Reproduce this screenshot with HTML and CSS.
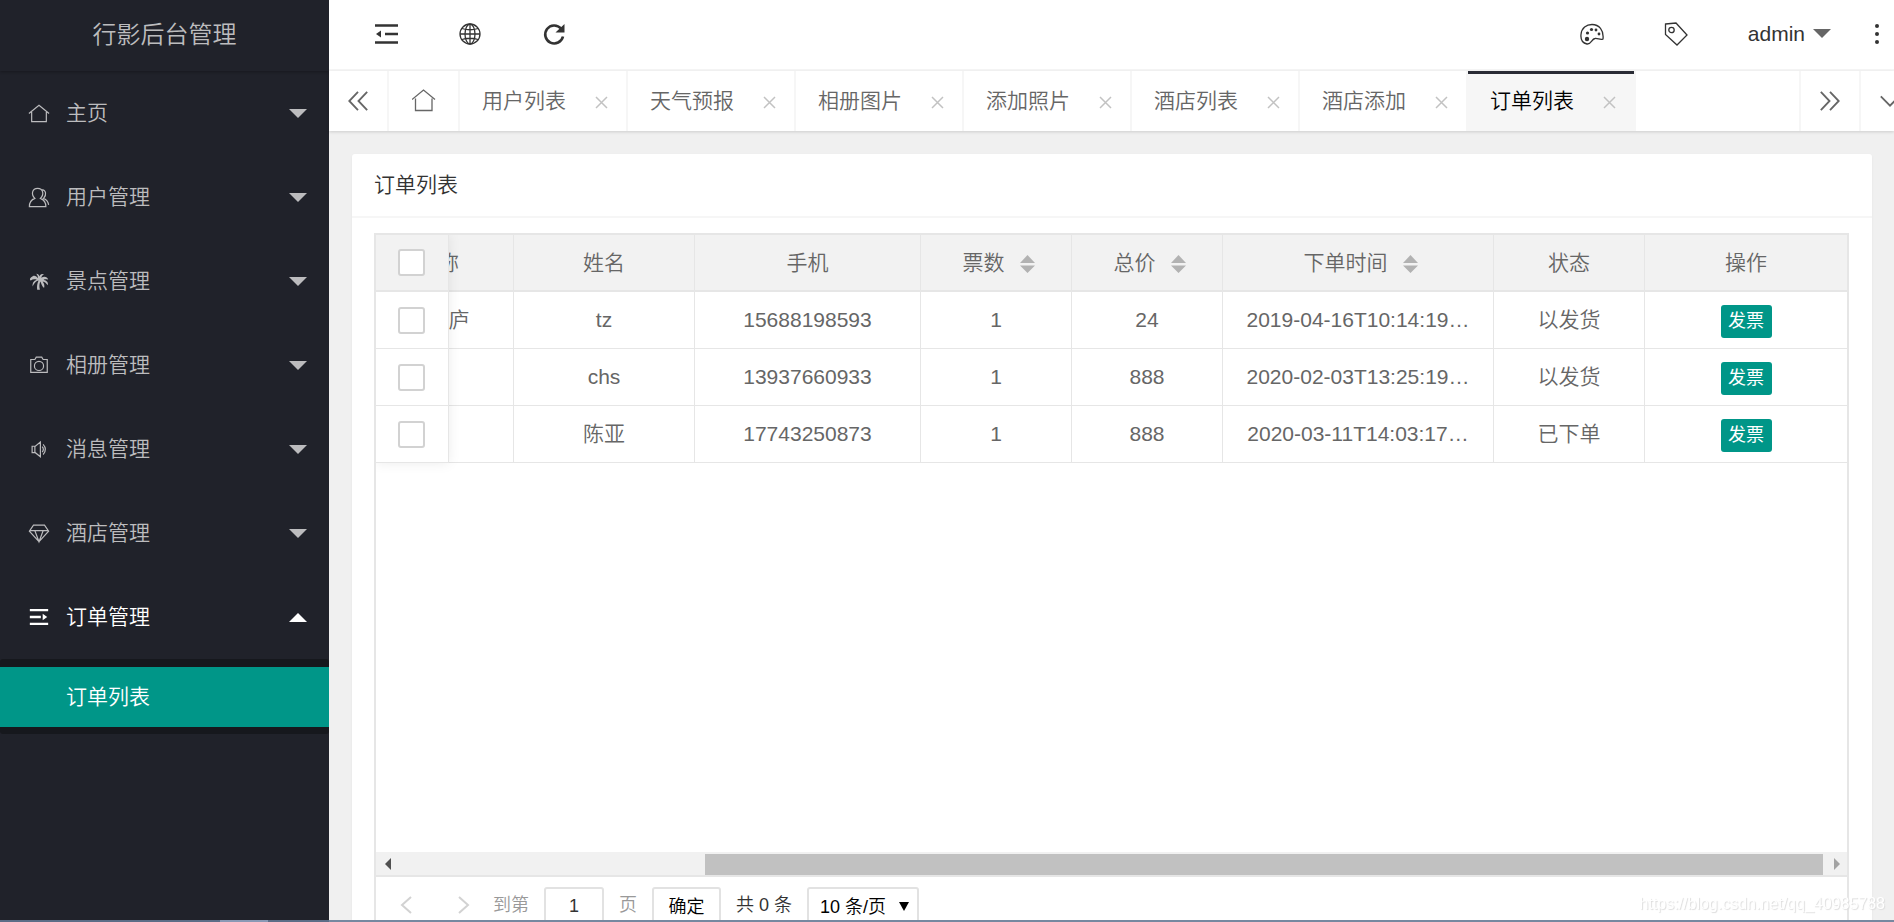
FILE: index.html
```html
<!DOCTYPE html>
<html lang="zh-CN">
<head>
<meta charset="utf-8">
<title>行影后台管理</title>
<link rel="stylesheet" href="styles.css">
</head>
<body>
<div class="app">
  <aside class="side">
    <div class="logo">行影后台管理</div>
    <nav class="menu">
      <a class="menu-item" href="#"><svg class="ico" viewBox="0 0 24 24"><path d="M1 12.500 12 3.500 23 12.500M4 11V21.500H20V11"/></svg><span>主页</span><i class="caret"></i></a>
      <a class="menu-item" href="#"><svg class="ico" viewBox="0 0 24 24"><path d="M1.500 22.500C1.500 17 4 14.800 7.500 13.500C3 9 4.500 2.500 10.500 2.500S18 9 13.500 13.500C17 14.800 19.500 17 19.500 22.500ZM14.500 4C20 4.500 20.500 9.500 17 13.500C20.500 15 22 17 22.500 20.500"/></svg><span>用户管理</span><i class="caret"></i></a>
      <a class="menu-item" href="#"><svg class="ico" viewBox="0 0 24 24"><path class="solid" d="M11 9C9 6 6 5 3.500 8C1.500 9.500 2 11 3 11.500C5 10 7 9.500 9.500 10.500C6 11.500 4.500 14 5 18C7 14 9 12 11.500 11.500C10 15 9.500 18 10 21.500L13 21.500C12 18 12.500 14.500 13.500 12.500C14.500 14.500 15 17.500 17.500 19.500C18.500 17 17.500 14.500 16 12.500C18.500 13 20 14.500 21.500 16.500C22.500 13.500 20.500 11.500 17 10.500C19 10 20.500 10 22 10.500C21 7 17.500 6.500 14.500 8.500C15 6.500 16 5.500 17.500 5C15 3.500 13 5 12.500 7C12 5 11 4 9 4C10 5.500 11 7 11 9Z"/></svg><span>景点管理</span><i class="caret"></i></a>
      <a class="menu-item" href="#"><svg class="ico" viewBox="0 0 24 24"><path d="M3 6H7.500L9 3.500H15L16.500 6H21V20H3Z"/><circle cx="12" cy="13" r="5"/></svg><span>相册管理</span><i class="caret"></i></a>
      <a class="menu-item" href="#"><svg class="ico" viewBox="0 0 24 24"><path d="M4.500 9H8L13.500 4.500V20.500L8 16H4.500ZM7.500 9V16M15.500 9.500Q18 12.500 15.500 15.500M16.500 7Q21.500 12.500 16.500 18"/></svg><span>消息管理</span><i class="caret"></i></a>
      <a class="menu-item" href="#"><svg class="ico" viewBox="0 0 24 24"><path d="M6 3.500H18L22.500 10L12 21.500L1.500 10ZM1.500 9.500H22.500M7.500 9.500 12 21.500 16.500 9.500"/></svg><span>酒店管理</span><i class="caret"></i></a>
      <a class="menu-item open" href="#"><svg class="ico" viewBox="0 0 24 24"><path class="thick" d="M2 4.500H22M2 12H14M2 19.500H22"/><path class="solid" d="M16 8.500 21 12 16 15.500Z"/></svg><span>订单管理</span><i class="caret"></i></a>
      <div class="submenu"><a href="#">订单列表</a></div>
    </nav>
  </aside>

  <div class="main">
    <header class="topbar">
      <button class="tool" aria-label="收起菜单"><svg class="ico" viewBox="0 0 24 24"><path class="thick" d="M1 3.500H24M11 12H24M1 20.500H24"/><path class="solid" d="M7 8.500V15.500L2 12Z"/></svg></button>
      <button class="tool" aria-label="网站"><svg class="ico" viewBox="0 0 24 24"><circle cx="12" cy="12" r="10"/><ellipse cx="12" cy="12" rx="5" ry="10"/><path d="M12 2V22M2 12H22M4 6.500Q12 9 20 6.500M4 17.500Q12 15 20 17.500"/></svg></button>
      <button class="tool" aria-label="刷新"><svg class="ico" viewBox="0 0 24 24"><path class="thick" d="M19 6.500A9 9 0 1 0 21 14.500"/><path class="solid" d="M22.500 2V10.500H13.500Z"/></svg></button>
      <span class="space"></span>
      <button class="tool" aria-label="主题"><svg class="ico" viewBox="0 0 24 24"><path d="M7 22C2.500 21 .5 17.500 1 12.500C1.500 6 6.500 2.500 12 2.500C19 2.500 24 8 23 17C20.500 18.500 18 16 15 16.500C11.500 17 11.500 22.500 7 22Z"/><g class="solid"><circle cx="7" cy="17" r="2.200"/><circle cx="7.500" cy="11" r="1.600"/><circle cx="11.500" cy="7.500" r="1.600"/><circle cx="16" cy="8" r="1.400"/><circle cx="19" cy="12" r="1.400"/></g></svg></button>
      <button class="tool" aria-label="便签"><svg class="ico" viewBox="0 0 24 24"><path d="M1.500 2 12 1 23 13 13 23 1.500 12.500Z"/><circle cx="7.500" cy="8" r="2.700"/></svg></button>
      <button class="user">admin<i class="caret"></i></button>
      <button class="more" aria-label="更多"><svg class="ico" viewBox="0 0 24 24"><g class="solid"><circle cx="12" cy="4" r="2"/><circle cx="12" cy="12" r="2"/><circle cx="12" cy="20" r="2"/></g></svg></button>
    </header>

    <div class="tabs">
      <button class="tab-ctl" aria-label="向左"><svg class="ico" viewBox="0 0 24 24"><path class="mid" d="M12 2 2.500 12 12 22M22 2 12.500 12 22 22"/></svg></button>
      <button class="tab-home" aria-label="主页"><svg class="ico" viewBox="0 0 24 24"><path d="M0 10.500 11.500 1 23 10.500M3.500 9.500V21.500H20V9.500"/></svg></button>
      <div class="tab"><a href="#">用户列表</a><button class="close" aria-label="关闭"><svg viewBox="0 0 13 13"><path d="M1 1 12 12M12 1 1 12"/></svg></button></div>
      <div class="tab"><a href="#">天气预报</a><button class="close" aria-label="关闭"><svg viewBox="0 0 13 13"><path d="M1 1 12 12M12 1 1 12"/></svg></button></div>
      <div class="tab"><a href="#">相册图片</a><button class="close" aria-label="关闭"><svg viewBox="0 0 13 13"><path d="M1 1 12 12M12 1 1 12"/></svg></button></div>
      <div class="tab"><a href="#">添加照片</a><button class="close" aria-label="关闭"><svg viewBox="0 0 13 13"><path d="M1 1 12 12M12 1 1 12"/></svg></button></div>
      <div class="tab"><a href="#">酒店列表</a><button class="close" aria-label="关闭"><svg viewBox="0 0 13 13"><path d="M1 1 12 12M12 1 1 12"/></svg></button></div>
      <div class="tab"><a href="#">酒店添加</a><button class="close" aria-label="关闭"><svg viewBox="0 0 13 13"><path d="M1 1 12 12M12 1 1 12"/></svg></button></div>
      <div class="tab active"><a href="#">订单列表</a><button class="close" aria-label="关闭"><svg viewBox="0 0 13 13"><path d="M1 1 12 12M12 1 1 12"/></svg></button></div>
      <span class="space"></span>
      <button class="tab-ctl right" aria-label="向右"><svg class="ico" viewBox="0 0 24 24"><path class="mid" d="M2 2 11.500 12 2 22M12 2 21.500 12 12 22"/></svg></button>
      <div class="tab-end"><button class="tab-ctl right" aria-label="标签操作"><svg class="ico" viewBox="0 0 24 24"><path class="mid" d="M2 7 12 17 22 7"/></svg></button></div>
    </div>

    <main class="content">
      <section class="card">
        <h1 class="card-title">订单列表</h1>
        <div class="card-body">
          <div class="grid">
            <div class="tables">
              <div class="fixed">
                <table>
                  <thead><tr><th><input type="checkbox" aria-label="全选"></th></tr></thead>
                  <tbody>
                    <tr><td><input type="checkbox" aria-label="选择 tz"></td></tr>
                    <tr><td><input type="checkbox" aria-label="选择 chs"></td></tr>
                    <tr><td><input type="checkbox" aria-label="选择 陈亚"></td></tr>
                  </tbody>
                </table>
              </div>
              <div class="scroll">
                <table>
                  <colgroup><col class="w151"><col class="w181"><col class="w226"><col class="w151"><col class="w151"><col class="w271"><col class="w151"><col></colgroup>
                  <thead>
                    <tr><th>名称</th><th>姓名</th><th>手机</th>
                    <th class="sortable">票数<svg class="sort" viewBox="0 0 15 18"><path d="M0 8 7.500 0 15 8ZM0 10.500 7.500 18 15 10.500Z"/></svg></th>
                    <th class="sortable">总价<svg class="sort" viewBox="0 0 15 18"><path d="M0 8 7.500 0 15 8ZM0 10.500 7.500 18 15 10.500Z"/></svg></th>
                    <th class="sortable">下单时间<svg class="sort" viewBox="0 0 15 18"><path d="M0 8 7.500 0 15 8ZM0 10.500 7.500 18 15 10.500Z"/></svg></th>
                    <th>状态</th><th>操作</th></tr>
                  </thead>
                  <tbody>
                    <tr><td>　　庐</td><td>tz</td><td>15688198593</td><td>1</td><td>24</td><td>2019-04-16T10:14:19…</td><td>以发货</td><td><button class="btn">发票</button></td></tr>
                    <tr><td></td><td>chs</td><td>13937660933</td><td>1</td><td>888</td><td>2020-02-03T13:25:19…</td><td>以发货</td><td><button class="btn">发票</button></td></tr>
                    <tr><td></td><td>陈亚</td><td>17743250873</td><td>1</td><td>888</td><td>2020-03-11T14:03:17…</td><td>已下单</td><td><button class="btn">发票</button></td></tr>
                  </tbody>
                </table>
              </div>
            </div>
            <div class="hbar">
              <svg class="arr dark" viewBox="0 0 6 12"><path d="M6 0V12L0 6Z"/></svg>
              <div class="track"><div class="thumb"></div></div>
              <svg class="arr" viewBox="0 0 6 12"><path d="M0 0V12L6 6Z"/></svg>
            </div>
            <div class="pager">
              <button class="pg" aria-label="上一页"><svg viewBox="0 0 12 18"><path d="M11 1 2 9 11 17"/></svg></button>
              <button class="pg" aria-label="下一页"><svg viewBox="0 0 12 18"><path d="M1 1 10 9 1 17"/></svg></button>
              <label class="skip" for="page">到第</label>
              <input class="box num" id="page" type="text" value="1">
              <span class="skip">页</span>
              <button class="box ok">确定</button>
              <span class="count">共 0 条</span>
              <div class="limit"><select class="box" aria-label="每页条数"><option>10 条/页</option></select></div>
            </div>
          </div>
        </div>
      </section>
    </main>
  </div>
</div>
<div class="strip"></div>
<div class="mark">https://blog.csdn.net/qq_40985788</div>
</body>
</html>
```
FILE: styles.css
```css
* { box-sizing: border-box; }
body {
  margin: 0;
  height: 100vh;
  display: flex;
  flex-direction: column;
  overflow: hidden;
  background: #f0f0f0;
  color: #666;
  font: 350 21px/36px "Liberation Sans", "Noto Sans CJK SC", sans-serif;
}
a { color: inherit; text-decoration: none; }
button, input, select { font: inherit; color: inherit; }
button { border: 0; padding: 0; background: none; }
svg { display: block; flex: none; }
.ico { width: 24px; height: 24px; fill: none; stroke: currentColor; stroke-width: 1.3; }
.ico .thick { stroke-width: 2.6; }
.ico .mid { stroke-width: 2; }
.ico .solid { fill: currentColor; stroke: none; }
.space { flex: 1; }
.caret { border: 9px solid transparent; border-top-color: currentColor; border-bottom: 0; }

.app { flex: 1; min-height: 0; display: flex; }
.side { width: 329px; flex: none; background: #20222a; color: #bcbcbe; overflow: hidden; }
.logo { height: 71px; line-height: 69px; text-align: center; font-size: 24px; box-shadow: 0 1px 3px rgba(0, 0, 0, .3); }
.menu-item { display: flex; align-items: center; height: 84px; padding: 0 22px 0 28px; }
.menu-item .ico { width: 22px; height: 22px; margin-right: 16px; }
.menu-item span { flex: 1; }
.menu-item.open { color: #fff; }
.open .caret { border-bottom: 9px solid; border-top: 0; }
.submenu { background: #16181d; padding: 8px 0 7px; border-radius: 3px; }
.submenu a { display: block; padding-left: 66px; line-height: 60px; background: #009688; color: #fff; }

.main { flex: 1; min-width: 0; display: flex; flex-direction: column; }
.topbar { flex: none; display: flex; height: 71px; padding: 0 0 2px 15px; background: #fff; border-bottom: 2px solid #f6f6f6; color: #333; }
.tool, .more { display: flex; align-items: center; justify-content: center; width: 84px; }
.more { width: 34px; }
.user { display: flex; align-items: center; gap: 8px; padding: 0 29px 0 30px; }
.user .caret { border-top-color: #666; }

.tabs { position: relative; flex: none; display: flex; height: 60px; background: #fff; box-shadow: 0 1px 3px rgba(0, 0, 0, .15); }
.tab-ctl, .tab-home { display: flex; align-items: center; justify-content: center; flex: none; width: 60px; border-right: 2px solid #f6f6f6; }
.tab-home { width: 71px; }
.tab-ctl .ico { width: 22px; height: 22px; }
.tab-ctl.right { border-right: 0; border-left: 2px solid #f6f6f6; }
.tab-end { width: 35px; overflow: hidden; display: flex; }
.tab { display: flex; align-items: center; justify-content: space-between; width: 168px; padding: 0 18px 0 22px; border-right: 2px solid #f6f6f6; }
.tab.active { background: #f6f6f6; color: #000; box-shadow: inset 0 3px #292b34, -2px 0 #f6f6f6; }
.close { padding-top: 3px; }
.close svg { width: 13px; height: 13px; fill: none; stroke: #c2c2c2; stroke-width: 1.5; }

.content { flex: 1; min-height: 0; display: flex; padding: 23px 22px 0 23px; }
.card { flex: 1; min-width: 0; display: flex; flex-direction: column; background: #fff; border-radius: 3px 3px 0 0; box-shadow: 0 1px 3px rgba(0, 0, 0, .05); }
.card-title { margin: 0; padding: 0 22px; font-size: 21px; font-weight: 350; line-height: 62px; color: #333; border-bottom: 2px solid #f6f6f6; }
.card-body { flex: 1; min-height: 0; display: flex; padding: 15px 23px 0 22px; }
.grid { flex: 1; min-width: 0; display: flex; flex-direction: column; border: 2px solid #e6e6e6; border-bottom: 0; }
.tables { flex: 1; min-height: 0; display: flex; overflow: hidden; }
.fixed { position: relative; flex: none; align-self: flex-start; width: 73px; background: #fff; box-shadow: 0 0 12px rgba(0, 0, 0, .08); }
.fixed th, .fixed td { padding-right: 2px; }
.scroll { flex: 1; min-width: 0; display: flex; align-items: flex-start; justify-content: flex-end; overflow: hidden; }
table { width: 100%; table-layout: fixed; border-collapse: separate; border-spacing: 0; }
.scroll table { flex: none; width: calc(100% + 86px); }
.w151 { width: 151px; }
.w181 { width: 181px; }
.w226 { width: 226px; }
.w271 { width: 271px; }
th, td { height: 57px; padding: 0; font-weight: 350; text-align: center; white-space: nowrap; border-right: 1px solid #e6e6e6; border-bottom: 1px solid #e6e6e6; }
th { background: #f2f2f2; border-bottom-width: 2px; }
.scroll th:last-child, .scroll td:last-child { border-right: 0; }
.scroll .sortable { padding-left: 5px; }
.sort { display: inline-block; width: 15px; height: 18px; margin-left: 15px; vertical-align: -3px; fill: #b2b2b2; }
input[type="checkbox"] { display: block; appearance: none; width: 27px; height: 27px; margin: 0 auto; border: 2px solid #d2d2d2; border-radius: 3px; background: #fff; }
.btn { display: block; width: 51px; margin: 3px auto 0; line-height: 33px; font-size: 18px; font-weight: 400; background: #009688; color: #fff; border-radius: 3px; }

.hbar { flex: none; display: flex; align-items: center; height: 25px; padding: 0 7px 0 9px; background: #f1f1f1; border-bottom: 2px solid #e6e6e6; }
.arr { width: 6px; height: 12px; fill: #a3a3a3; }
.arr.dark { fill: #505050; }
.track { flex: 1; align-self: stretch; display: flex; justify-content: flex-end; margin: 0 11px; padding-top: 2px; }
.thumb { width: 78.7%; background: #c1c1c1; }

.pager { flex: none; display: flex; align-items: flex-start; height: 43px; padding: 10px 0 0 24px; font-size: 18px; overflow: hidden; color: #333; }
.pg { display: flex; align-items: center; height: 36px; width: 58px; }
.pg + .pg { width: 35px; }
.pg svg { width: 12px; height: 18px; fill: none; stroke: #d2d2d2; stroke-width: 2; }
.skip { color: #999; }
.box { height: 39px; background: #fff; border: 2px solid #e2e2e2; border-radius: 3px; }
.num { width: 60px; margin: 0 15px; padding: 0; text-align: center; }
.ok { width: 69px; margin: 0 15px; color: #000; }
.count { margin-right: 15px; }
.limit { position: relative; }
.limit select { display: block; appearance: none; width: 112px; padding: 0 11px; color: #000; }
.limit::after { content: ""; position: absolute; top: 15px; right: 10px; border: 5px solid transparent; border-top: 9px solid #000; border-bottom: 0; }

.strip { flex: none; height: 2px; background: linear-gradient(to right, #5c6d87 220px, #8a99b5 220px 268px, #5c6d87 268px 329px, #7688a0 329px); }
.mark { position: fixed; right: 9px; bottom: 0; font-size: 16px; color: #fff; text-shadow: 1px 1px 1px #ddd; }
```
